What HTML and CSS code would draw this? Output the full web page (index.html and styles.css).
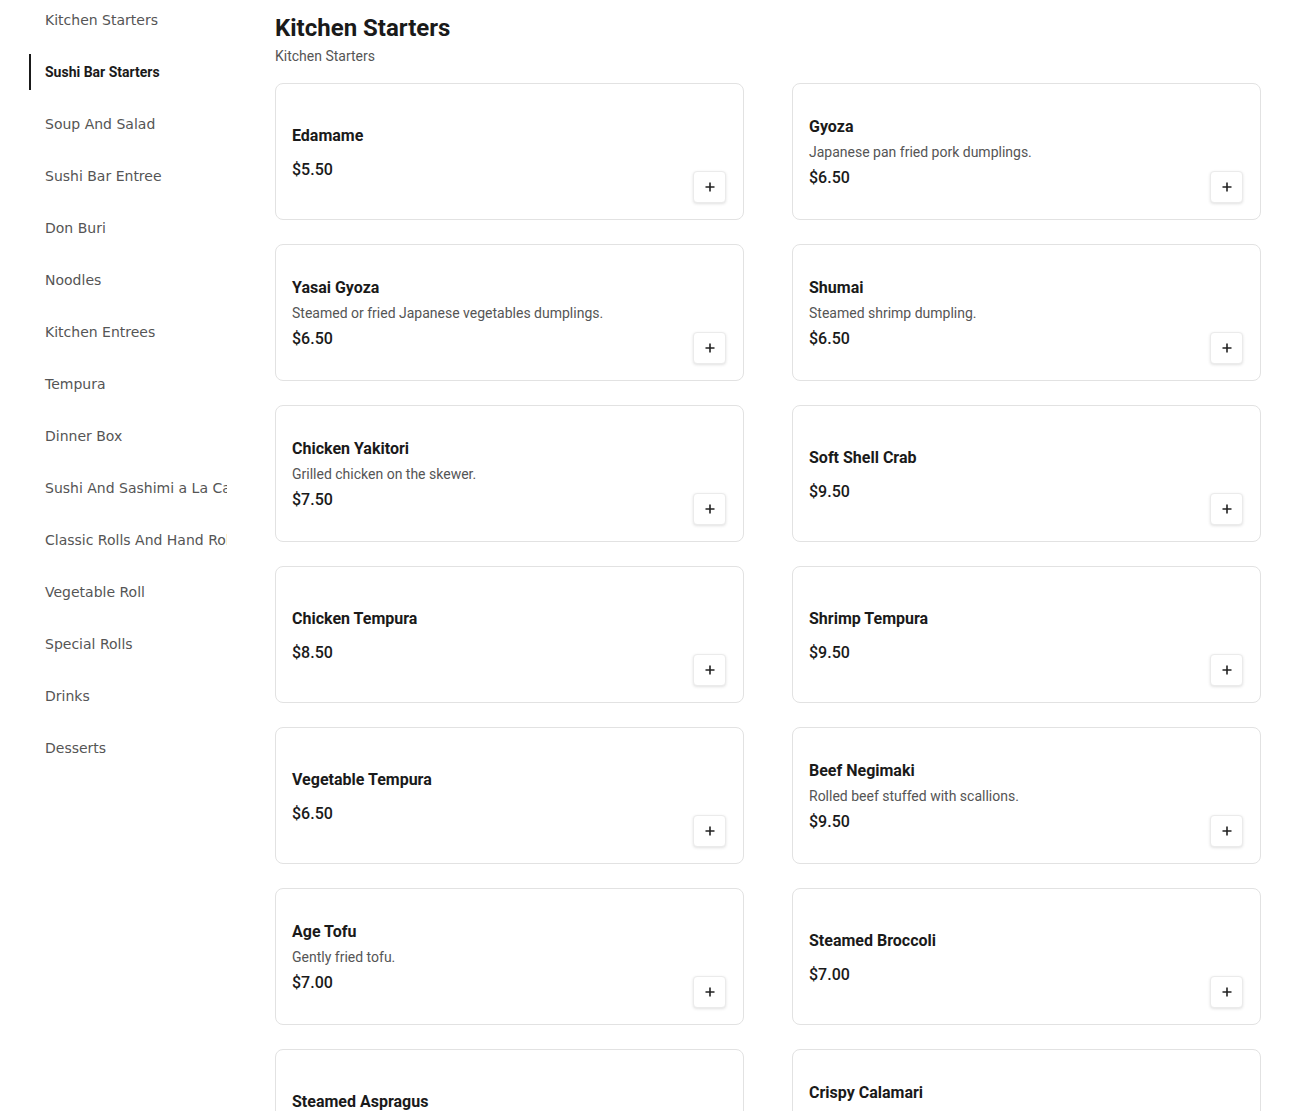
FILE: index.html
```html
<!DOCTYPE html>
<html lang="en">
<head>
<meta charset="utf-8">
<title>Menu</title>
<link rel="stylesheet" href="styles.css">
</head>
<body>
<div class="page">
  <nav class="sidebar">
    <a class="cat">Kitchen Starters</a>
    <a class="cat active">Sushi Bar Starters</a>
    <a class="cat">Soup And Salad</a>
    <a class="cat">Sushi Bar Entree</a>
    <a class="cat">Don Buri</a>
    <a class="cat">Noodles</a>
    <a class="cat">Kitchen Entrees</a>
    <a class="cat">Tempura</a>
    <a class="cat">Dinner Box</a>
    <a class="cat">Sushi And Sashimi a La Carte</a>
    <a class="cat">Classic Rolls And Hand Rolls</a>
    <a class="cat">Vegetable Roll</a>
    <a class="cat">Special Rolls</a>
    <a class="cat">Drinks</a>
    <a class="cat">Desserts</a>
  </nav>
  <main class="main">
    <h1 class="title">Kitchen Starters</h1>
    <p class="subtitle">Kitchen Starters</p>
    <div class="grid">
      <div class="card"><div class="info"><h3 class="name">Edamame</h3><div class="price">$5.50</div></div><button class="add"><svg viewBox="0 0 12 12" width="12" height="12"><path d="M6 1.5v9M1.5 6h9" stroke="#222" stroke-width="1.6" fill="none"/></svg></button></div>
      <div class="card"><div class="info"><h3 class="name">Gyoza</h3><p class="desc">Japanese pan fried pork dumplings.</p><div class="price">$6.50</div></div><button class="add"><svg viewBox="0 0 12 12" width="12" height="12"><path d="M6 1.5v9M1.5 6h9" stroke="#222" stroke-width="1.6" fill="none"/></svg></button></div>
      <div class="card"><div class="info"><h3 class="name">Yasai Gyoza</h3><p class="desc">Steamed or fried Japanese vegetables dumplings.</p><div class="price">$6.50</div></div><button class="add"><svg viewBox="0 0 12 12" width="12" height="12"><path d="M6 1.5v9M1.5 6h9" stroke="#222" stroke-width="1.6" fill="none"/></svg></button></div>
      <div class="card"><div class="info"><h3 class="name">Shumai</h3><p class="desc">Steamed shrimp dumpling.</p><div class="price">$6.50</div></div><button class="add"><svg viewBox="0 0 12 12" width="12" height="12"><path d="M6 1.5v9M1.5 6h9" stroke="#222" stroke-width="1.6" fill="none"/></svg></button></div>
      <div class="card"><div class="info"><h3 class="name">Chicken Yakitori</h3><p class="desc">Grilled chicken on the skewer.</p><div class="price">$7.50</div></div><button class="add"><svg viewBox="0 0 12 12" width="12" height="12"><path d="M6 1.5v9M1.5 6h9" stroke="#222" stroke-width="1.6" fill="none"/></svg></button></div>
      <div class="card"><div class="info"><h3 class="name">Soft Shell Crab</h3><div class="price">$9.50</div></div><button class="add"><svg viewBox="0 0 12 12" width="12" height="12"><path d="M6 1.5v9M1.5 6h9" stroke="#222" stroke-width="1.6" fill="none"/></svg></button></div>
      <div class="card"><div class="info"><h3 class="name">Chicken Tempura</h3><div class="price">$8.50</div></div><button class="add"><svg viewBox="0 0 12 12" width="12" height="12"><path d="M6 1.5v9M1.5 6h9" stroke="#222" stroke-width="1.6" fill="none"/></svg></button></div>
      <div class="card"><div class="info"><h3 class="name">Shrimp Tempura</h3><div class="price">$9.50</div></div><button class="add"><svg viewBox="0 0 12 12" width="12" height="12"><path d="M6 1.5v9M1.5 6h9" stroke="#222" stroke-width="1.6" fill="none"/></svg></button></div>
      <div class="card"><div class="info"><h3 class="name">Vegetable Tempura</h3><div class="price">$6.50</div></div><button class="add"><svg viewBox="0 0 12 12" width="12" height="12"><path d="M6 1.5v9M1.5 6h9" stroke="#222" stroke-width="1.6" fill="none"/></svg></button></div>
      <div class="card"><div class="info"><h3 class="name">Beef Negimaki</h3><p class="desc">Rolled beef stuffed with scallions.</p><div class="price">$9.50</div></div><button class="add"><svg viewBox="0 0 12 12" width="12" height="12"><path d="M6 1.5v9M1.5 6h9" stroke="#222" stroke-width="1.6" fill="none"/></svg></button></div>
      <div class="card"><div class="info"><h3 class="name">Age Tofu</h3><p class="desc">Gently fried tofu.</p><div class="price">$7.00</div></div><button class="add"><svg viewBox="0 0 12 12" width="12" height="12"><path d="M6 1.5v9M1.5 6h9" stroke="#222" stroke-width="1.6" fill="none"/></svg></button></div>
      <div class="card"><div class="info"><h3 class="name">Steamed Broccoli</h3><div class="price">$7.00</div></div><button class="add"><svg viewBox="0 0 12 12" width="12" height="12"><path d="M6 1.5v9M1.5 6h9" stroke="#222" stroke-width="1.6" fill="none"/></svg></button></div>
      <div class="card"><div class="info"><h3 class="name">Steamed Aspragus</h3><div class="price">$7.00</div></div><button class="add"><svg viewBox="0 0 12 12" width="12" height="12"><path d="M6 1.5v9M1.5 6h9" stroke="#222" stroke-width="1.6" fill="none"/></svg></button></div>
      <div class="card"><div class="info"><h3 class="name">Crispy Calamari</h3><p class="desc">Lightly fried squid.</p><div class="price">$9.50</div></div><button class="add"><svg viewBox="0 0 12 12" width="12" height="12"><path d="M6 1.5v9M1.5 6h9" stroke="#222" stroke-width="1.6" fill="none"/></svg></button></div>
    </div>
  </main>
</div>
</body>
</html>
```

FILE: styles.css
```css
* { box-sizing: border-box; }
html, body { margin: 0; padding: 0; background: #fff; }
body { font-family: Roboto, "Liberation Sans", sans-serif; color: #1a1a1a; }

.page {
  display: flex;
  align-items: flex-start;
  padding-left: 29px;
}

.sidebar {
  width: 198px;
  flex: 0 0 198px;
  display: flex;
  flex-direction: column;
  gap: 16px;
  padding-top: 2px;
}
.cat {
  display: flex;
  align-items: center;
  height: 36px;
  padding-left: 14px;
  border-left: 2px solid transparent;
  font-family: "DejaVu Sans", sans-serif;
  font-size: 14px;
  color: #555;
  white-space: nowrap;
  overflow: hidden;
  text-decoration: none;
}
.cat.active {
  border-left-color: #1a1a1a;
  font-family: Roboto, sans-serif;
  font-weight: 700;
  color: #1a1a1a;
}

.main {
  flex: 0 0 986px;
  margin-left: 48px;
  padding-bottom: 40px;
}
.title {
  margin: 12px 0 0;
  font-size: 24px;
  line-height: 32px;
  font-weight: 700;
  color: #1a1a1a;
}
.subtitle {
  margin: 2px 0 17px;
  font-size: 14px;
  line-height: 20px;
  color: #555;
}

.grid {
  display: grid;
  grid-template-columns: 469px 469px;
  column-gap: 48px;
  row-gap: 24px;
}
.card {
  height: 137px;
  border: 1px solid #e2e2e2;
  border-radius: 8px;
  padding: 16px;
  display: flex;
  justify-content: space-between;
  align-items: center;
  background: #fff;
}
.info { display: flex; flex-direction: column; }
.name {
  margin: 2px 0 10px;
  font-size: 16px;
  line-height: 24px;
  font-weight: 700;
  color: #1a1a1a;
}
.desc {
  margin: -7px 0 4px;
  font-size: 14px;
  line-height: 20px;
  color: #555;
}
.price {
  font-size: 16px;
  line-height: 24px;
  font-weight: 500;
  color: #1a1a1a;
}
.add {
  align-self: flex-end;
  width: 33px;
  height: 32px;
  margin-right: 1px;
  padding: 0;
  border: 1px solid #ebebeb;
  border-radius: 4px;
  background: #fff;
  box-shadow: 0 1px 3px rgba(0,0,0,0.12);
  display: flex;
  align-items: center;
  justify-content: center;
}
.add svg { display: block; }
```
